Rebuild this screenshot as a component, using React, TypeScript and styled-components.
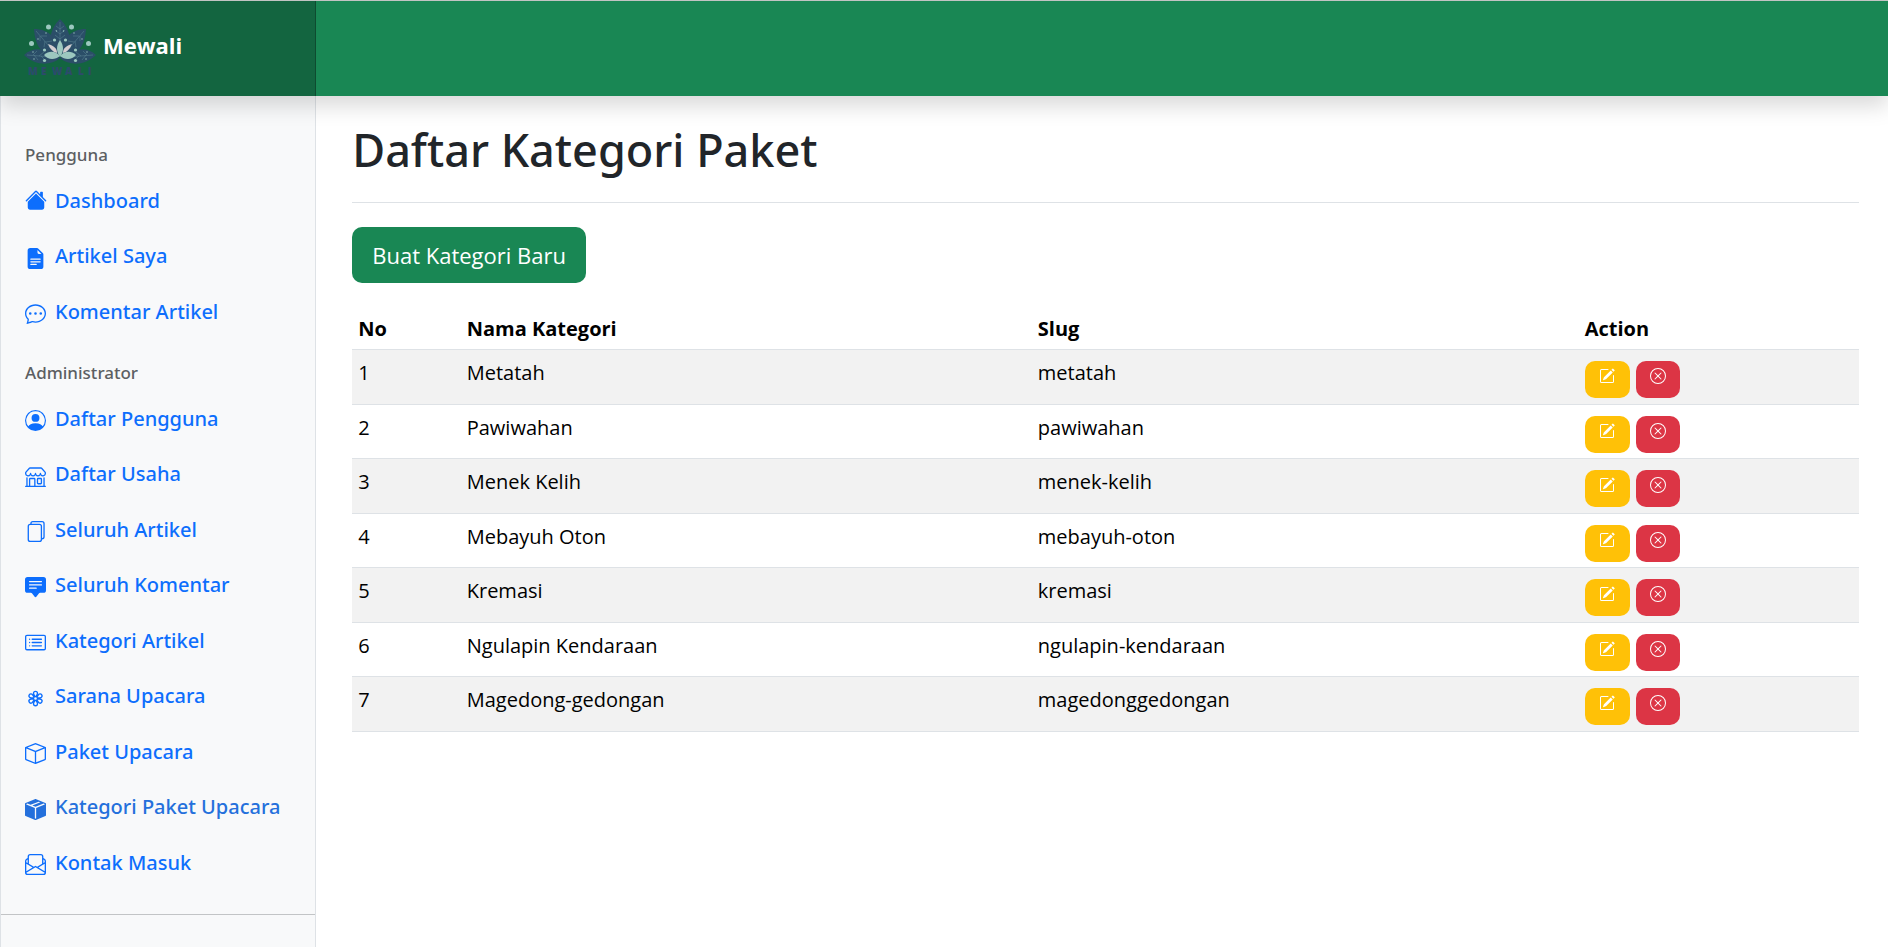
import React from "react";
import styled, { createGlobalStyle } from "styled-components";
import type { IconType } from "react-icons";
import {
  BsBox,
  BsBoxSeamFill,
  BsCardList,
  BsChatDots,
  BsChatSquareTextFill,
  BsEnvelopePaper,
  BsFileEarmarkTextFill,
  BsFiles,
  BsFlower3,
  BsHouseFill,
  BsPencilSquare,
  BsPersonCircle,
  BsShop,
  BsXCircle,
} from "react-icons/bs";

const GlobalStyle = createGlobalStyle`
  *, *::before, *::after { box-sizing: border-box; }
  body {
    margin: 0;
    background: #fff;
    color: #212529;
    font-family: "Open Sans", "Noto Sans", sans-serif;
    font-size: 20px;
    line-height: 30px;
  }
`;

const Page = styled.div`
  display: flex;
  flex-direction: column;
  min-height: 100vh;
  border-top: 1px solid #c6c9c8;
`;

const Navbar = styled.header`
  position: sticky;
  top: 0;
  z-index: 2;
  display: flex;
  height: 95px;
  background: #198754;
  box-shadow: 0 10px 20px rgba(0, 0, 0, 0.15);
`;

const Brand = styled.a`
  display: flex;
  align-items: center;
  gap: 7px;
  flex: 0 0 16.75%;
  padding: 0 24px 3px;
  background: #136540;
  box-shadow: inset -1px 0 0 rgba(0, 0, 0, 0.25);
  color: #fff;
  font-size: 22px;
  font-weight: 700;
  text-decoration: none;
`;

const BrandName = styled.span`
  padding-bottom: 4px;
`;

const LogoArt = styled.svg`
  flex: none;
  width: 72px;
  height: 60px;
`;

const Body = styled.div`
  display: flex;
  flex: 1;
`;

const Sidebar = styled.nav`
  flex: 0 0 16.75%;
  padding-top: 45px;
  background: #f8f9fa;
  border: 1px solid #dee2e6;
  border-width: 0 1px;
`;

const GroupTitle = styled.h2`
  margin: 0;
  padding: 0 24px;
  color: #5c5f62;
  font-family: "Noto Sans", "Open Sans", sans-serif;
  font-size: 17px;
  font-weight: 500;
  line-height: 28px;
`;

const Menu = styled.ul`
  margin: 4px 0 20px;
  padding: 0;
  list-style: none;
`;

const MenuLink = styled.a<{ $active?: boolean; $home?: boolean }>`
  display: flex;
  align-items: center;
  gap: ${(p) => (p.$home ? 8 : 9)}px;
  padding: 0 24px;
  color: ${(p) => (p.$active ? "#2470dc" : "#0d6efd")};
  font-family: "Noto Sans", "Open Sans", sans-serif;
  font-weight: 500;
  line-height: 55px;
  white-space: nowrap;
  text-decoration: none;

  li:nth-child(even) > & {
    line-height: 56px;
  }

  svg {
    flex: none;
    width: ${(p) => (p.$home ? 22 : 21)}px;
    height: ${(p) => (p.$home ? 22 : 21)}px;
    margin-top: ${(p) => (p.$home ? 0 : 4)}px;
    margin-bottom: ${(p) => (p.$home ? 2 : 0)}px;
  }
`;

const Divider = styled.hr`
  margin: 24px 0 0;
  border: 0;
  border-top: 1px solid #c2c4c6;
`;

const Main = styled.main`
  flex: 1;
  min-width: 0;
  padding: 21px 29px 30px 36px;
`;

const Title = styled.h1`
  margin: 0 0 24px;
  padding-bottom: 19px;
  border-bottom: 1px solid #dee2e6;
  font-family: "Noto Sans", "Open Sans", sans-serif;
  font-size: 45px;
  font-weight: 500;
  line-height: 66px;
`;

const CreateButton = styled.button`
  height: 56px;
  padding: 0 20px;
  border: 0;
  border-radius: 10px;
  background: #198754;
  color: #fff;
  font: 400 22px "Open Sans", "Noto Sans", sans-serif;
  cursor: pointer;
`;

const Table = styled.table`
  width: 100%;
  margin-top: 25px;
  border-collapse: separate;
  border-spacing: 0;
  table-layout: fixed;
  color: #000;
`;

const Column = styled.col<{ $share: string }>`
  width: ${(p) => p.$share};
`;

const HeadCell = styled.th`
  height: 42px;
  padding: 6px 6px 5px;
  border-bottom: 1px solid #dee2e6;
  text-align: left;
  vertical-align: top;
`;

const Cell = styled.td`
  height: 55px;
  padding: 8px 6px 0;
  border-bottom: 1px solid #dee2e6;
  vertical-align: top;
`;

const Row = styled.tr`
  &:nth-child(odd) > ${Cell} {
    background: #f2f2f2;
  }
  &:nth-child(even) > ${Cell} {
    height: 54px;
  }
`;

const Actions = styled.div`
  display: flex;
  gap: 6px;
  padding-top: 3px;
`;

const ActionButton = styled.button<{ $tone: "edit" | "remove" }>`
  display: flex;
  justify-content: center;
  width: ${(p) => (p.$tone === "edit" ? 45 : 44)}px;
  height: 37px;
  padding: 7px 0 0;
  border: 0;
  border-radius: 10px;
  background: ${(p) => (p.$tone === "edit" ? "#ffc107" : "#dc3545")};
  color: #fff;
  font-size: 16px;
  cursor: pointer;
`;

type MenuEntry = { label: string; icon: IconType; active?: boolean; home?: boolean };

const userMenu: MenuEntry[] = [
  { label: "Dashboard", icon: BsHouseFill, home: true },
  { label: "Artikel Saya", icon: BsFileEarmarkTextFill },
  { label: "Komentar Artikel", icon: BsChatDots },
];

const adminMenu: MenuEntry[] = [
  { label: "Daftar Pengguna", icon: BsPersonCircle },
  { label: "Daftar Usaha", icon: BsShop },
  { label: "Seluruh Artikel", icon: BsFiles },
  { label: "Seluruh Komentar", icon: BsChatSquareTextFill },
  { label: "Kategori Artikel", icon: BsCardList },
  { label: "Sarana Upacara", icon: BsFlower3 },
  { label: "Paket Upacara", icon: BsBox },
  { label: "Kategori Paket Upacara", icon: BsBoxSeamFill, active: true },
  { label: "Kontak Masuk", icon: BsEnvelopePaper },
];

const categories = [
  { name: "Metatah", slug: "metatah" },
  { name: "Pawiwahan", slug: "pawiwahan" },
  { name: "Menek Kelih", slug: "menek-kelih" },
  { name: "Mebayuh Oton", slug: "mebayuh-oton" },
  { name: "Kremasi", slug: "kremasi" },
  { name: "Ngulapin Kendaraan", slug: "ngulapin-kendaraan" },
  { name: "Magedong-gedongan", slug: "magedonggedongan" },
];

/* One half of the lotus; the other half is its mirror image. */
function LotusHalf() {
  return (
    <>
      <path d="M0 38C9 29 22 31 36 41C27 49 11 49 0 38Z" fill="#2b4e68" />
      <path d="M10 12C24 12 33 20 37 38L33 41C17 38 11 28 10 12Z" fill="#2b4e68" />
      <path
        d="M3 38L28 40M9 38L13 34M15 39L20 35M10 38L14 43M17 39L22 44M12 14L30 35M16 19L16 24M21 24L20 30M17 19L23 19M22 25L28 24"
        stroke="#5d8794"
        strokeWidth=".5"
        fill="none"
      />
      <path d="M24 27C30 29 33 31 33 36C29 35 26 32 24 27Z" fill="#d3cdd0" />
      <path d="M20 38C25 33 32 34 36 39C31 43 24 43 20 38Z" fill="#9cc8bf" />
      <g fill="#9cc8bf">
        <circle cx="24.5" cy="10" r="2.5" />
        <circle cx="7.5" cy="26.5" r="2.5" />
        <circle cx="30.5" cy="23" r="1.6" />
        <circle cx="20.5" cy="33" r="1.6" />
        <circle cx="20.5" cy="43.5" r="1.6" />
        <circle cx="14" cy="22" r=".7" />
        <circle cx="22" cy="16" r=".7" />
        <circle cx="10" cy="42" r=".7" />
        <circle cx="9" cy="35" r=".7" />
        <circle cx="32.5" cy="14" r=".7" />
      </g>
    </>
  );
}

function Logo() {
  return (
    <LogoArt viewBox="0 0 72 60" role="img" aria-label="Mewali">
      <path d="M36 2C46 12 49 24 41 39L31 39C23 24 26 12 36 2Z" fill="#2b4e68" />
      <path
        d="M36 5V24M36 12L32 9M36 12L40 9M36 17L31 13M36 17L41 13M36 22L31 18M36 22L41 18"
        stroke="#5d8794"
        strokeWidth=".5"
        fill="none"
      />
      <LotusHalf />
      <g transform="matrix(-1 0 0 1 72 0)">
        <LotusHalf />
      </g>
      <path d="M36 23C40 29 40 34 36 40C32 34 32 29 36 23Z" fill="#9cc8bf" />
      <text
        x="4 17 28 41 54 64"
        y="58"
        fill="#2c4b6c"
        fontFamily="Open Sans, sans-serif"
        fontSize="10"
        fontWeight="800"
      >
        MEWALI
      </text>
    </LogoArt>
  );
}

function MenuList({ entries }: { entries: MenuEntry[] }) {
  return (
    <Menu>
      {entries.map(({ label, icon: Icon, active, home }) => (
        <li key={label}>
          <MenuLink
            href="#"
            $active={active}
            $home={home}
            aria-current={active ? "page" : undefined}
          >
            <Icon aria-hidden />
            {label}
          </MenuLink>
        </li>
      ))}
    </Menu>
  );
}

export default function App() {
  return (
    <Page>
      <GlobalStyle />
      <Navbar>
        <Brand href="#">
          <Logo />
          <BrandName>Mewali</BrandName>
        </Brand>
      </Navbar>
      <Body>
        <Sidebar>
          <GroupTitle>Pengguna</GroupTitle>
          <MenuList entries={userMenu} />
          <GroupTitle>Administrator</GroupTitle>
          <MenuList entries={adminMenu} />
          <Divider />
        </Sidebar>
        <Main>
          <Title>Daftar Kategori Paket</Title>
          <CreateButton type="button">Buat Kategori Baru</CreateButton>
          <Table>
            <colgroup>
              <Column $share="7.2%" />
              <Column $share="37.9%" />
              <Column $share="36.3%" />
              <Column $share="18.6%" />
            </colgroup>
            <thead>
              <tr>
                <HeadCell scope="col">No</HeadCell>
                <HeadCell scope="col">Nama Kategori</HeadCell>
                <HeadCell scope="col">Slug</HeadCell>
                <HeadCell scope="col">Action</HeadCell>
              </tr>
            </thead>
            <tbody>
              {categories.map(({ name, slug }, index) => (
                <Row key={slug}>
                  <Cell>{index + 1}</Cell>
                  <Cell>{name}</Cell>
                  <Cell>{slug}</Cell>
                  <Cell>
                    <Actions>
                      <ActionButton type="button" $tone="edit" aria-label={`Ubah ${name}`}>
                        <BsPencilSquare />
                      </ActionButton>
                      <ActionButton type="button" $tone="remove" aria-label={`Hapus ${name}`}>
                        <BsXCircle />
                      </ActionButton>
                    </Actions>
                  </Cell>
                </Row>
              ))}
            </tbody>
          </Table>
        </Main>
      </Body>
    </Page>
  );
}
